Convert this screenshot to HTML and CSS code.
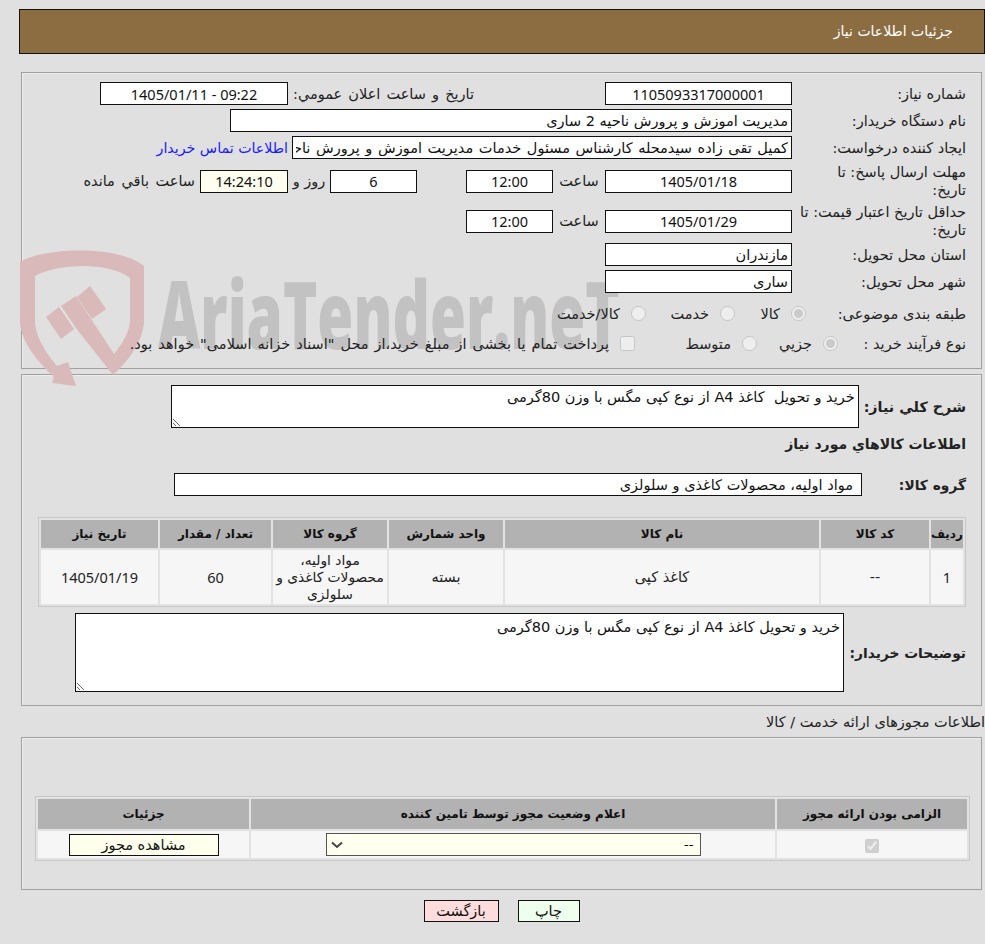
FILE: index.html
```html
<!DOCTYPE html>
<html lang="fa" dir="rtl">
<head>
    <meta charset="UTF-8">
    <meta name="viewport" content="width=device-width, initial-scale=1.0">
    <title>جزئیات اطلاعات نیاز</title>
    <link rel="stylesheet" href="styles.css">
</head>
<body>
    <div class="page-header">جزئیات اطلاعات نیاز</div>

    <!-- watermark sits behind the form fields -->
    <div class="watermark" aria-hidden="true">
        <svg class="wm-shield" xmlns="http://www.w3.org/2000/svg" viewBox="0 0 130 140" fill="#d9b9b9">
            <path d="M1 12 C25 -3 100 -5 125 16 L125 74 C122 95 108 112 94 125 L57 78 L42 56 L57 46 L95 104 C105 92 111 80 111 70 L111 28 C90 12 40 13 16 26 L16 74 C18 90 28 104 38 116 L49 112 L57 136 L33 133 L35 127 C15 108 2 90 1 72 Z"/>
            <path d="M71 36 L87 59 L73 69 L58 47 Z"/>
            <path d="M27 67 L40 57 L55 79 L42 89 Z"/>
        </svg>
        <span class="wm-text">AriaTender.neT</span>
    </div>

    <div class="panel panel-main">
        <div class="row">
            <label class="row-label">شماره نیاز:</label>
            <input class="field field-md" type="text" readonly value="1105093317000001">
            <label class="announce-label">تاریخ و ساعت اعلان عمومي:</label>
            <input class="field announce-field" type="text" readonly value="09:22 - 1405/01/11">
        </div>
        <div class="row">
            <label class="row-label">نام دستگاه خریدار:</label>
            <input class="field field-text buyer-field" type="text" readonly value="مدیریت اموزش و پرورش ناحیه 2 ساری">
        </div>
        <div class="row">
            <label class="row-label">ایجاد کننده درخواست:</label>
            <input class="field field-text creator-field" type="text" readonly value="کمیل تقی زاده سیدمحله کارشناس مسئول خدمات مدیریت اموزش و پرورش ناحیه 2 ساری">
            <a class="contact-link" href="#">اطلاعات تماس خریدار</a>
        </div>
        <div class="row row-tall">
            <label class="row-label">مهلت ارسال پاسخ: تا<br>تاریخ:</label>
            <input class="field field-md" type="text" readonly value="1405/01/18">
            <span class="time-label">ساعت</span>
            <input class="field field-sm" type="text" readonly value="12:00">
            <input class="field field-sm days-field" type="text" readonly value="6">
            <span class="days-label">روز و</span>
            <input class="field field-sm timer-field" type="text" readonly value="14:24:10">
            <span class="left-label">ساعت باقي مانده</span>
        </div>
        <div class="row row-tall">
            <label class="row-label">حداقل تاریخ اعتبار قیمت: تا تاریخ:</label>
            <input class="field field-md" type="text" readonly value="1405/01/29">
            <span class="time-label">ساعت</span>
            <input class="field field-sm" type="text" readonly value="12:00">
        </div>
        <div class="row row-province">
            <label class="row-label">استان محل تحویل:</label>
            <input class="field field-md field-text" type="text" readonly value="مازندران">
        </div>
        <div class="row">
            <label class="row-label">شهر محل تحویل:</label>
            <input class="field field-md field-text" type="text" readonly value="ساری">
        </div>
        <div class="row row-options row-subject">
            <label class="row-label option-label">طبقه بندی موضوعی:</label>
            <span class="option option-goods"><input type="radio" name="subject" checked disabled>کالا</span>
            <span class="option option-service"><input type="radio" name="subject" disabled>خدمت</span>
            <span class="option"><input type="radio" name="subject" disabled>کالا/خدمت</span>
        </div>
        <div class="row row-options row-process">
            <label class="row-label process-label">نوع فرآیند خرید :</label>
            <span class="option option-minor"><input type="radio" name="process" checked disabled>جزیي</span>
            <span class="option option-medium"><input type="radio" name="process" disabled>متوسط</span>
            <span class="option option-treasury"><input type="checkbox" disabled>پرداخت تمام یا بخشی از مبلغ خرید،از محل "اسناد خزانه اسلامی" خواهد بود.</span>
        </div>
    </div>

    <div class="panel panel-items">
        <div class="summary-row">
            <label class="bold-label">شرح كلي نياز:</label>
            <textarea class="area summary-area" readonly>خرید و تحویل  کاغذ A4 از نوع کپی مگس با وزن 80گرمی</textarea>
        </div>
        <h3 class="section-title">اطلاعات كالاهاي مورد نياز</h3>
        <div class="group-row">
            <label class="bold-label">گروه کالا:</label>
            <input class="field field-text group-field" type="text" readonly value="مواد اولیه، محصولات کاغذی و سلولزی">
        </div>
        <table class="grid items-grid">
            <thead>
                <tr>
                    <th class="col-num">ردیف</th>
                    <th class="col-code">کد کالا</th>
                    <th class="col-name">نام کالا</th>
                    <th class="col-unit">واحد شمارش</th>
                    <th class="col-group">گروه کالا</th>
                    <th class="col-qty">تعداد / مقدار</th>
                    <th>تاریخ نیاز</th>
                </tr>
            </thead>
            <tbody>
                <tr>
                    <td class="num">1</td>
                    <td>--</td>
                    <td>کاغذ کپی</td>
                    <td>بسته</td>
                    <td class="cell-group">مواد اولیه، محصولات کاغذی و سلولزی</td>
                    <td class="num">60</td>
                    <td class="num">1405/01/19</td>
                </tr>
            </tbody>
        </table>
        <div class="notes-row">
            <label class="bold-label">توضیحات خریدار:</label>
            <textarea class="area notes-area" readonly>خرید و تحویل کاغذ A4 از نوع کپی مگس با وزن 80گرمی</textarea>
        </div>
    </div>

    <div class="permits-title">اطلاعات مجوزهای ارائه خدمت / کالا</div>

    <div class="panel panel-permits">
        <table class="grid permits-grid">
            <thead>
                <tr>
                    <th class="col-required">الزامی بودن ارائه مجوز</th>
                    <th class="col-status">اعلام وضعیت مجوز توسط تامین کننده</th>
                    <th>جزئیات</th>
                </tr>
            </thead>
            <tbody>
                <tr>
                    <td><input type="checkbox" checked disabled></td>
                    <td>
                        <select class="status-select">
                            <option>--</option>
                        </select>
                    </td>
                    <td><button class="view-btn">مشاهده مجوز</button></td>
                </tr>
            </tbody>
        </table>
    </div>

    <div class="actions">
        <button class="print-btn">چاپ</button>
        <button class="back-btn">بازگشت</button>
    </div>
</body>
</html>
```

FILE: styles.css
```css
* {
    box-sizing: border-box;
    font-family: "DejaVu Sans", sans-serif;
}

body {
    margin: 0;
    height: 944px;
    overflow: hidden;
    position: relative;
    background-color: #e0e0e0;
    color: #222;
    font-size: 14.5px;
}

.page-header {
    margin: 9px 0 0 19px;
    height: 45px;
    padding: 0 31px;
    line-height: 43px;
    background-color: #8c6d41;
    border: 1px solid #111;
    color: white;
    font-size: 14px;
}

.panel {
    position: relative;
    margin-left: 21px;
    margin-right: 3px;
    border: 1px solid #a0a0a0;
    box-shadow: inset 1px 1px 0 #eee;
}

/* watermark */
.watermark {
    position: absolute;
    top: 0;
    left: 0;
    width: 700px;
    height: 400px;
    z-index: 1;
    pointer-events: none;
}

.wm-shield {
    position: absolute;
    left: 19px;
    top: 250px;
    width: 130px;
    height: 140px;
}

.wm-text {
    position: absolute;
    left: 158px;
    top: 253px;
    direction: ltr;
    font-family: "Open Sans", sans-serif;
    font-size: 94px;
    line-height: 120px;
    font-weight: 800;
    color: #c2c2c2;
    white-space: nowrap;
    transform: scaleX(0.62);
    transform-origin: left top;
}

.panel-main {
    margin-top: 18px;
    height: 297px;
    padding: 9px 15px 0;
}

.row {
    position: relative;
    z-index: 2;
    display: flex;
    align-items: center;
    height: 23px;
    margin-bottom: 4px;
}

.row-tall {
    height: 36px;
}

.row-province {
    margin-top: 1px;
}

.row-label {
    width: 170px;
    margin-left: 4px;
    flex-shrink: 0;
    line-height: 18px;
}

.field {
    height: 23px;
    padding: 0 8px;
    border: 1px solid #111;
    border-radius: 0;
    background-color: white;
    color: #111;
    font-family: "Noto Sans", sans-serif;
    font-size: 14.5px;
    text-align: center;
    outline: none;
    flex-shrink: 0;
}

.field-text {
    font-family: "DejaVu Sans", sans-serif;
    text-align: right;
    padding: 0 3px;
}

.field-md {
    width: 187px;
}

.field-sm {
    width: 87px;
}

.buyer-field {
    width: 562px;
}

.creator-field {
    width: 500px;
    word-spacing: 1px;
}

.announce-label {
    width: 186px;
    margin-right: 131px;
    white-space: nowrap;
    word-spacing: 1.5px;
}

.announce-field {
    width: 188px;
}

.contact-link {
    margin-right: 4px;
    color: #1a1aff;
    font-size: 14.2px;
    text-decoration: none;
    white-space: nowrap;
}

.time-label {
    width: 52px;
    text-align: center;
}

.days-field {
    margin-right: 49px;
}

.days-label {
    width: 42px;
    text-align: center;
}

.timer-field {
    width: 88px;
    background-color: #fffff0;
}

.left-label {
    margin-right: 5px;
    white-space: nowrap;
    word-spacing: 2px;
}

.row-options {
    height: 23px;
}

.row-subject {
    margin-top: 9px;
    margin-bottom: 7px;
}

.option-label {
    width: 160px;
    margin-left: 0;
}

.process-label {
    width: 128px;
    margin-left: 0;
}

.option {
    display: flex;
    align-items: center;
    gap: 11px;
    white-space: nowrap;
}

.option input {
    width: 15px;
    height: 15px;
    margin: 0;
}

.option-goods {
    width: 71px;
}

.option-service {
    width: 89px;
}

.option-minor {
    width: 81px;
}

.option-medium {
    width: 122px;
}

.option-treasury {
    word-spacing: 1.4px;
}

.panel-items {
    margin-top: 5px;
    height: 332px;
    padding: 10px 15px 0;
}

.summary-row,
.group-row,
.notes-row {
    position: relative;
    z-index: 2;
    display: flex;
    align-items: center;
}

.bold-label {
    font-weight: 700;
    font-size: 14.3px;
    white-space: nowrap;
}

.area {
    border: 1px solid #111;
    border-radius: 0;
    background-color: white;
    color: #111;
    font-size: 14.5px;
    padding: 3px 3px;
    outline: none;
    resize: both;
}

.summary-area {
    width: 688px;
    height: 43px;
    margin-right: 5px;
}

.section-title {
    margin: 5px 0 0;
    height: 23px;
    font-size: 14px;
    line-height: 23px;
    color: #222;
}

.group-row {
    justify-content: flex-start;
    margin-top: 17px;
}

.group-row .bold-label {
    width: 104px;
    font-size: 13.8px;
}

.group-field {
    width: 688px;
    padding: 0 8px;
}

.grid {
    border: 1px solid #c8c8c8;
    border-spacing: 2px;
    background-color: #e2e2e2;
    table-layout: fixed;
    font-size: 14.5px;
}

.grid th {
    background-color: #b2b2b2;
    color: #111;
    font-size: 12px;
    font-weight: 700;
    padding: 0;
    height: 28px;
}

.grid td {
    background-color: #f6f6f6;
    color: #222;
    text-align: center;
    padding: 0;
}

.grid td.num {
    font-family: "Noto Sans", sans-serif;
}

.grid td.cell-group {
    font-size: 13.8px;
}

.items-grid {
    width: 928px;
    height: 90px;
    margin-top: 21px;
}

.items-grid td {
    height: 54px;
    line-height: 17px;
}

.col-num {
    width: 32px;
}

.col-code {
    width: 108px;
}

.col-name {
    width: 314px;
}

.col-unit {
    width: 114px;
}

.col-group {
    width: 114px;
}

.col-qty {
    width: 111px;
}

.notes-row {
    margin-top: 6px;
}

.notes-row .bold-label {
    width: 122px;
    font-size: 13.8px;
}

.notes-area {
    width: 769px;
    height: 79px;
    padding-top: 5px;
}

.permits-title {
    margin-top: 5px;
    height: 23px;
    line-height: 23px;
    white-space: nowrap;
    font-size: 14.5px;
}

.panel-permits {
    height: 153px;
    margin-top: 3px;
    padding: 58px 11px 0 0;
}

.permits-grid {
    width: 935px;
    height: 64px;
}

.permits-grid th {
    height: 30px;
}

.permits-grid td {
    height: 27px;
}

.permits-grid input {
    margin: 0;
    width: 14px;
    height: 14px;
    vertical-align: middle;
}

.col-required {
    width: 190px;
}

.col-status {
    width: 524px;
}

.status-select {
    width: 375px;
    height: 23px;
    padding: 0 6px;
    border: 1px solid #555;
    border-radius: 0;
    appearance: none;
    background-color: #fffff0;
    background-image: url("data:image/svg+xml,%3Csvg xmlns='http://www.w3.org/2000/svg' width='12' height='8'%3E%3Cpath d='M1 1.5 L6 6 L11 1.5' fill='none' stroke='%23444' stroke-width='2'/%3E%3C/svg%3E");
    background-repeat: no-repeat;
    background-position: left 4px center;
    font-size: 13px;
    vertical-align: middle;
}

.view-btn {
    width: 150px;
    height: 22px;
    border: 1px solid #111;
    background-color: #ffffee;
    color: #111;
    font-size: 14.5px;
    padding: 0;
    vertical-align: middle;
}

.actions {
    display: flex;
    justify-content: center;
    gap: 19px;
    margin-top: 10px;
    padding-left: 18px;
}

.actions button {
    height: 22px;
    border: 1px solid #111;
    color: #111;
    font-size: 14.5px;
    padding: 0;
}

.print-btn {
    width: 62px;
    background-color: #eeffee;
}

.back-btn {
    width: 75px;
    background-color: #ffdddd;
}
```
